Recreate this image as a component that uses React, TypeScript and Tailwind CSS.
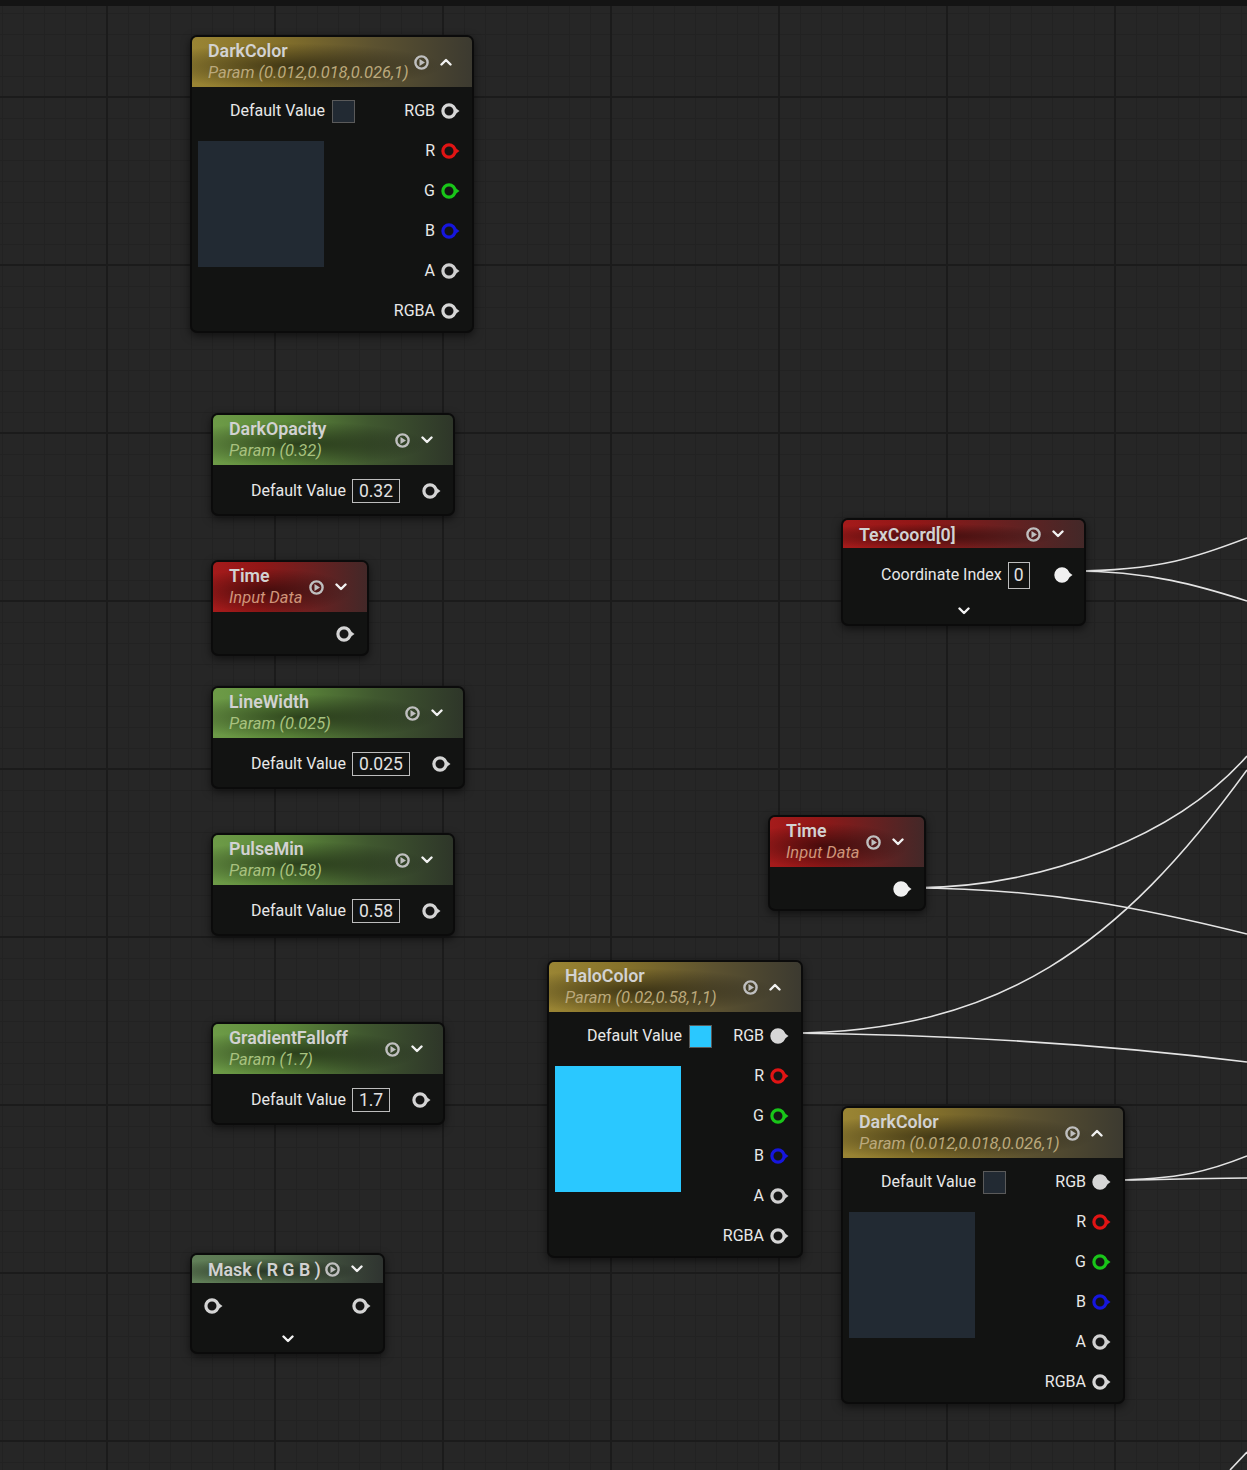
import type { ReactNode } from 'react'

type HeaderColor = 'gold' | 'green' | 'red' | 'mask'

const headerBg: Record<HeaderColor, string> = {
  gold: 'bg-[linear-gradient(90deg,#9a8534_0%,#85712a_30%,#5c5230_65%,#3c3a30_100%)]',
  green: 'bg-[linear-gradient(90deg,#6d9b47_0%,#5d8a3a_30%,#40582f_65%,#2e3629_100%)]',
  red: 'bg-[linear-gradient(90deg,#a51b1b_0%,#921717_30%,#6a2020_65%,#432828_100%)]',
  mask: 'bg-[linear-gradient(90deg,#617f58_0%,#57744f_35%,#404f3d_70%,#2f3430_100%)]',
}

const subColor: Record<HeaderColor, string> = {
  gold: 'text-[#bba97c]',
  green: 'text-[#a8c27f]',
  red: 'text-[#cf957a]',
  mask: 'text-[#cfcfcf]',
}

function PlayIcon() {
  return (
    <svg width="15" height="15" viewBox="0 0 15 15">
      <circle cx="7.5" cy="7.5" r="6.1" fill="none" stroke="#bfbfbf" strokeWidth="2.4" />
      <path d="M5.5 3.9 L11 7.5 L5.5 11.1 Z" fill="#bfbfbf" />
    </svg>
  )
}

function Chevron({ up = false }: { up?: boolean }) {
  return (
    <svg width="12" height="8" viewBox="0 0 12 8">
      <polyline
        points={up ? '1.5,6.5 6,2 10.5,6.5' : '1.5,1.5 6,6 10.5,1.5'}
        fill="none"
        stroke="#f2f2f2"
        strokeWidth="2.4"
        strokeLinecap="round"
        strokeLinejoin="round"
      />
    </svg>
  )
}

function Pin({ color = '#d4d4d4', filled = false }: { color?: string; filled?: boolean }) {
  return (
    <svg width="20" height="18" viewBox="0 0 20 18" className="shrink-0">
      <circle cx="8" cy="9" r="6.1" fill={filled ? color : '#151515'} stroke={color} strokeWidth="3.2" />
      <path d="M14.8 6.3 L18.5 9 L14.8 11.7 Z" fill={color} />
    </svg>
  )
}

function GraphNode({
  x,
  y,
  w,
  color,
  title,
  sub,
  up = false,
  children,
}: {
  x: number
  y: number
  w: number
  color: HeaderColor
  title: string
  sub?: string
  up?: boolean
  children: ReactNode
}) {
  return (
    <div
      className="absolute overflow-hidden rounded-[7px] border-2 border-[#0b0b0b] bg-[#121312] shadow-[0_3px_8px_rgba(0,0,0,0.55)]"
      style={{ left: x, top: y, width: w }}
    >
      <div
        className={`relative flex items-center justify-between pl-4 pr-[20px] ${sub ? 'h-[50px]' : 'h-[28px]'} ${headerBg[color]}`}
      >
        <div className="absolute inset-0 bg-[radial-gradient(ellipse_55%_45%_at_35%_58%,rgba(0,0,0,0.5),transparent)]" />
        <div className="relative flex flex-col">
          <span className="text-[17.8px] font-semibold leading-[21px] text-[#d2d2d2]">{title}</span>
          {sub && <span className={`text-[16.5px] italic leading-[23px] ${subColor[color]}`}>{sub}</span>}
        </div>
        <div className="relative flex items-center gap-[11px]">
          <PlayIcon />
          <Chevron up={up} />
        </div>
      </div>
      {children}
    </div>
  )
}

function ValueBox({ value, tall = false }: { value: string; tall?: boolean }) {
  return (
    <span
      className={`flex items-center border border-[#bdbdbd] text-[17.5px] text-[#e2e2e2] ${tall ? 'h-[27px] px-[5px]' : 'h-[24px] px-[6px]'}`}
    >
      {value}
    </span>
  )
}

function ScalarBody({ value }: { value: string }) {
  return (
    <div className="mt-[6px] mb-[3px] flex h-[40px] items-center justify-between pr-[11px] pl-[38px]">
      <div className="flex items-center gap-[6px]">
        <span className="text-[16px] text-[#e8e8e8]">Default Value</span>
        <ValueBox value={value} />
      </div>
      <Pin />
    </div>
  )
}

const colorPins = [
  { label: 'RGB', color: '#d6d6d6' },
  { label: 'R', color: '#e01414' },
  { label: 'G', color: '#19c519' },
  { label: 'B', color: '#1616dd' },
  { label: 'A', color: '#cfcfcf' },
  { label: 'RGBA', color: '#d6d6d6' },
]

function ColorBody({ swatch, rgbFilled = false }: { swatch: string; rgbFilled?: boolean }) {
  return (
    <div className="flex justify-between pt-[4px]">
      <div className="flex flex-col pl-[6px]">
        <div className="flex h-[40px] items-center gap-[7px] pl-[32px]">
          <span className="text-[16px] text-[#e8e8e8]">Default Value</span>
          <span className="h-[23px] w-[23px] border border-[#5a5a5a]" style={{ background: swatch }} />
        </div>
        <div className="mt-[10px] h-[126px] w-[126px]" style={{ background: swatch }} />
      </div>
      <div className="flex flex-col pr-[11px]">
        {colorPins.map((p, i) => (
          <div key={p.label} className="flex h-[40px] items-center justify-end gap-[6px]">
            <span className="text-[16px] text-[#e8e8e8]">{p.label}</span>
            <Pin color={p.color} filled={rgbFilled && i === 0} />
          </div>
        ))}
      </div>
    </div>
  )
}

function Wires() {
  return (
    <svg className="pointer-events-none absolute inset-0" width="1247" height="1470" viewBox="0 0 1247 1470">
      <g fill="none" stroke="#e4e4e4" strokeWidth="1.6">
        <path d="M1072 571 C1160 571, 1200 556, 1247 538" />
        <path d="M1072 571 C1150 571, 1200 586, 1247 601" />
        <path d="M910 888 C1050 888, 1180 832, 1247 756" />
        <path d="M910 888 C1050 888, 1150 910, 1247 934" />
        <path d="M788 1033 C1000 1033, 1120 945, 1247 770" />
        <path d="M788 1033 C1000 1035, 1150 1050, 1247 1062" />
        <path d="M1109 1180 C1180 1180, 1212 1170, 1247 1156" />
        <path d="M1109 1180 C1160 1180, 1200 1178, 1247 1178" />
        <path d="M1230 1470 L1247 1452" />
      </g>
    </svg>
  )
}

export default function App() {
  return (
    <div className="relative h-[1470px] w-[1247px] overflow-hidden bg-[#262626] font-['Roboto',sans-serif]">
      <div className="h-[6px] bg-[#141414]" />
      <div className="absolute inset-x-0 top-[6px] bottom-0 bg-[linear-gradient(to_right,#222222_1px,transparent_1px),linear-gradient(to_bottom,#222222_1px,transparent_1px)] bg-[length:21px_21px] bg-[position:2px_7px]" />
      <div className="absolute inset-x-0 top-[6px] bottom-0 bg-[linear-gradient(to_right,#1b1b1b_2px,transparent_2px),linear-gradient(to_bottom,#1b1b1b_2px,transparent_2px)] bg-[length:168px_168px] bg-[position:106px_90px]" />

      <Wires />

      <GraphNode x={190} y={35} w={284} color="gold" title="DarkColor" sub="Param (0.012,0.018,0.026,1)" up>
        <ColorBody swatch="#222a33" />
      </GraphNode>

      <GraphNode x={211} y={413} w={244} color="green" title="DarkOpacity" sub="Param (0.32)">
        <ScalarBody value="0.32" />
      </GraphNode>

      <GraphNode x={211} y={560} w={158} color="red" title="Time" sub="Input Data">
        <div className="mt-[2px] flex h-[40px] items-center justify-end pr-[11px]">
          <Pin />
        </div>
      </GraphNode>

      <GraphNode x={211} y={686} w={254} color="green" title="LineWidth" sub="Param (0.025)">
        <ScalarBody value="0.025" />
      </GraphNode>

      <GraphNode x={211} y={833} w={244} color="green" title="PulseMin" sub="Param (0.58)">
        <ScalarBody value="0.58" />
      </GraphNode>

      <GraphNode x={211} y={1022} w={234} color="green" title="GradientFalloff" sub="Param (1.7)">
        <ScalarBody value="1.7" />
      </GraphNode>

      <GraphNode x={190} y={1253} w={195} color="mask" title="Mask ( R G B )">
        <div className="mt-[3px] flex h-[40px] items-center justify-between pl-[12px] pr-[11px]">
          <Pin />
          <Pin />
        </div>
        <div className="flex h-[26px] items-center justify-center">
          <Chevron />
        </div>
      </GraphNode>

      <GraphNode x={841} y={518} w={245} color="red" title="TexCoord[0]">
        <div className="mt-[7px] flex h-[40px] items-center justify-between pl-[38px] pr-[10px]">
          <div className="flex items-center gap-[6px]">
            <span className="text-[16px] text-[#e8e8e8]">Coordinate Index</span>
            <ValueBox value="0" tall />
          </div>
          <Pin color="#f0f0f0" filled />
        </div>
        <div className="flex h-[29px] items-end justify-center pb-[9px]">
          <Chevron />
        </div>
      </GraphNode>

      <GraphNode x={768} y={815} w={158} color="red" title="Time" sub="Input Data">
        <div className="mt-[2px] flex h-[40px] items-center justify-end pr-[11px]">
          <Pin color="#f0f0f0" filled />
        </div>
      </GraphNode>

      <GraphNode x={547} y={960} w={256} color="gold" title="HaloColor" sub="Param (0.02,0.58,1,1)" up>
        <ColorBody swatch="#2ac8ff" rgbFilled />
      </GraphNode>

      <GraphNode x={841} y={1106} w={284} color="gold" title="DarkColor" sub="Param (0.012,0.018,0.026,1)" up>
        <ColorBody swatch="#222a33" rgbFilled />
      </GraphNode>
    </div>
  )
}
